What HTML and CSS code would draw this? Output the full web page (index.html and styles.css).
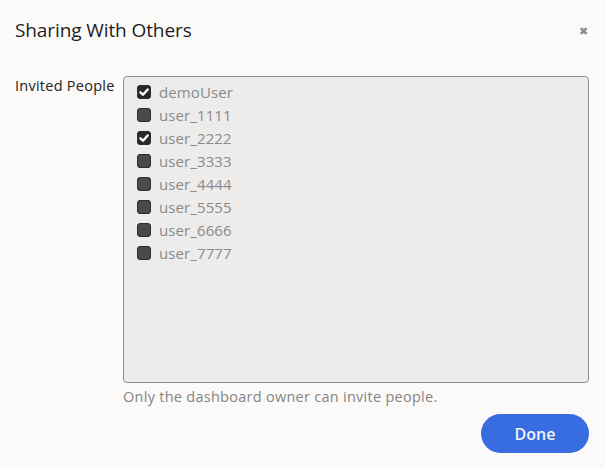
FILE: index.html
```html
<!DOCTYPE html>
<html>
<head>
<meta charset="utf-8">
<link rel="stylesheet" href="styles.css">
</head>
<body>
<div class="dialog">
  <div class="header">
    <h1 class="title">Sharing With Others</h1>
    <span class="close">&#x2716;</span>
  </div>
  <div class="field">
    <div class="label">Invited People</div>
    <div class="control">
      <div class="list">
        <label class="row"><span class="cb checked"><svg viewBox="0 0 14 14" width="14" height="14"><path d="M3.4 7.3 L6 9.7 L10.7 4.5" fill="none" stroke="#fff" stroke-width="2.4" stroke-linecap="round" stroke-linejoin="round"/></svg></span><span class="name">demoUser</span></label>
        <label class="row"><span class="cb"></span><span class="name">user_1111</span></label>
        <label class="row"><span class="cb checked"><svg viewBox="0 0 14 14" width="14" height="14"><path d="M3.4 7.3 L6 9.7 L10.7 4.5" fill="none" stroke="#fff" stroke-width="2.4" stroke-linecap="round" stroke-linejoin="round"/></svg></span><span class="name">user_2222</span></label>
        <label class="row"><span class="cb"></span><span class="name">user_3333</span></label>
        <label class="row"><span class="cb"></span><span class="name">user_4444</span></label>
        <label class="row"><span class="cb"></span><span class="name">user_5555</span></label>
        <label class="row"><span class="cb"></span><span class="name">user_6666</span></label>
        <label class="row"><span class="cb"></span><span class="name">user_7777</span></label>
      </div>
      <div class="help">Only the dashboard owner can invite people.</div>
    </div>
  </div>
  <div class="footer">
    <button class="done">Done</button>
  </div>
</div>
</body>
</html>
```
FILE: styles.css
```css
html, body {
  margin: 0;
  padding: 0;
  background: #fbfaf9;
  font-family: "Open Sans", Lato, sans-serif;
}
.dialog {
  width: 605px;
  height: 468px;
  box-sizing: border-box;
  padding: 0 16px 0 15px;
  display: flex;
  flex-direction: column;
}
.header {
  display: flex;
  align-items: center;
  justify-content: space-between;
  height: 58px;
  padding-top: 1px;
}
.title {
  margin: 0;
  font-size: 19px;
  font-weight: 400;
  color: #1d1d1d;
  letter-spacing: -0.1px;
}
.close {
  font-size: 11px;
  color: #8a8a8a;
  margin-right: 1px;
}
.field {
  display: flex;
  margin-top: 17px;
}
.label {
  width: 108px;
  font-size: 14.5px;
  color: #222;
  letter-spacing: 0.25px;
  line-height: 20px;
}
.control {
  flex: 1;
  display: flex;
  flex-direction: column;
}
.list {
  height: 307px;
  box-sizing: border-box;
  background: #edeceb;
  border: 1px solid #8e8e8e;
  border-radius: 4px;
  padding: 3px 13px;
}
.row {
  display: flex;
  align-items: center;
  height: 23px;
}
.cb {
  width: 14px;
  height: 14px;
  border-radius: 4px;
  background: #4a4a4a;
  box-shadow: inset 0 0 0 1px #2e2e2e;
  display: inline-flex;
  margin-right: 8px;
}
.cb.checked {
  background: #2a2a2a;
}
.name {
  font-size: 15px;
  color: #8a8a8a;
  letter-spacing: 0.1px;
}
.help {
  margin-top: 4px;
  font-size: 14.5px;
  line-height: 20px;
  color: #858585;
  letter-spacing: 0.27px;
}
.footer {
  display: flex;
  justify-content: flex-end;
  margin-top: 7px;
}
.done {
  width: 108px;
  height: 39px;
  border: none;
  border-radius: 20px;
  background: #386de2;
  color: #f2f4fb;
  font-family: "Open Sans", Lato, sans-serif;
  font-size: 16px;
  font-weight: 600;
}
```
